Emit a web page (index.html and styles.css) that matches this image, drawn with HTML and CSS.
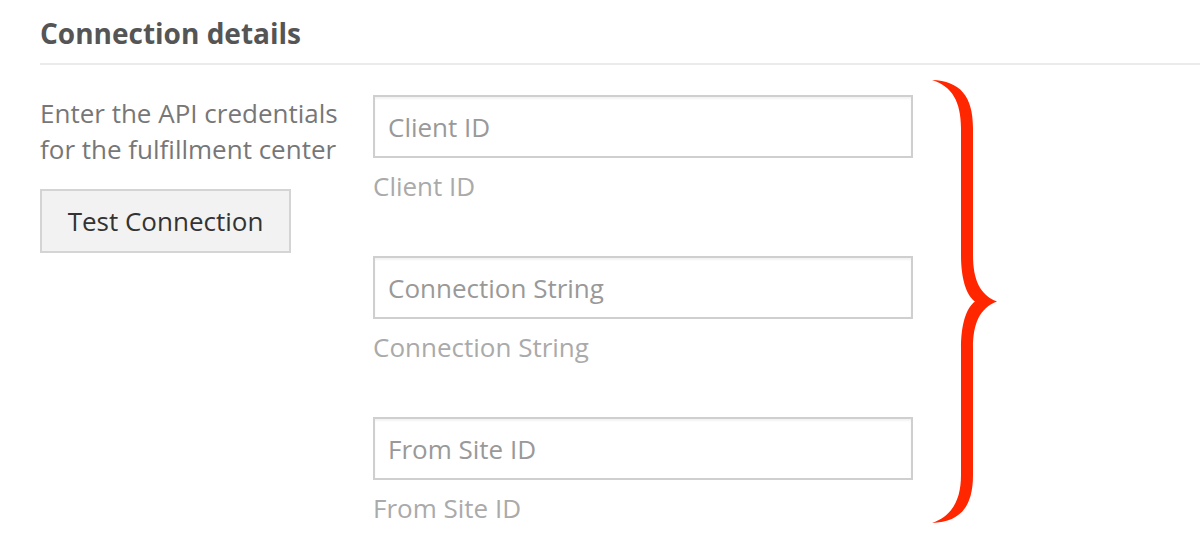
FILE: index.html
```html
<!DOCTYPE html>
<html lang="en">
<head>
<meta charset="utf-8">
<title>Connection details</title>
<link rel="stylesheet" href="styles.css">
</head>
<body>
<section class="panel">
  <h2 class="panel-title">Connection details</h2>
  <div class="panel-row">
    <div class="intro">
      <p class="intro-text">Enter the API credentials for the fulfillment center</p>
      <button class="btn" type="button">Test Connection</button>
    </div>
    <div class="fields">
      <div class="field">
        <input class="field-input" type="text" placeholder="Client ID">
        <div class="field-help">Client ID</div>
      </div>
      <div class="field">
        <input class="field-input" type="text" placeholder="Connection String">
        <div class="field-help">Connection String</div>
      </div>
      <div class="field">
        <input class="field-input" type="text" placeholder="From Site ID">
        <div class="field-help">From Site ID</div>
      </div>
    </div>
    <svg class="brace" width="66" height="444" viewBox="0 0 66 444" aria-hidden="true">
      <path d="M0,0 C28,1 41,16 41,48 L41,175 C41,200 48,215 65,221.5 C48,228 41,243 41,268 L41,395 C41,427 28,442 0,443 C20,436 29,420 29,395 L29,268 C29,245 34,228 43,221.5 C34,215 29,198 29,175 L29,48 C29,22 20,6 0,0 Z" fill="#ff2600"/>
    </svg>
  </div>
</section>
</body>
</html>
```

FILE: styles.css
```css
html, body {
  margin: 0;
  padding: 0;
  background: #ffffff;
}

body {
  font-family: "Open Sans", "Liberation Sans", sans-serif;
  width: 1200px;
  height: 536px;
  overflow: hidden;
}

.panel {
  padding-left: 40px;
}

.panel-title {
  margin: 0;
  padding-top: 17px;
  padding-bottom: 14px;
  font-size: 28px;
  line-height: 32px;
  font-weight: 700;
  color: #555555;
  border-bottom: 2px solid #ebebeb;
}

.panel-row {
  display: flex;
  align-items: flex-start;
  margin-top: 30px;
}

.intro {
  width: 333px;
  flex: none;
}

.intro-text {
  margin: 0;
  font-size: 26px;
  line-height: 36px;
  color: #777777;
  width: 320px;
}

.btn {
  display: block;
  margin-top: 22px;
  box-sizing: border-box;
  width: 251px;
  height: 64px;
  padding: 0;
  background: #f2f2f2;
  border: 2px solid #d4d4d4;
  border-radius: 0;
  font-family: "Open Sans", "Liberation Sans", sans-serif;
  font-size: 26px;
  line-height: 60px;
  color: #333333;
  text-align: center;
}

.fields {
  display: flex;
  flex-direction: column;
  gap: 52px;
  width: 540px;
  flex: none;
}

.field {
  display: flex;
  flex-direction: column;
}

.field-input {
  box-sizing: border-box;
  width: 540px;
  height: 63px;
  margin: 0;
  padding: 0 13px;
  border: 2px solid #cfcfcf;
  border-radius: 0;
  box-shadow: inset 0 2px 2px rgba(0, 0, 0, 0.05);
  font-family: "Open Sans", "Liberation Sans", sans-serif;
  font-size: 26px;
  color: #555555;
  background: #ffffff;
  outline: none;
}

.field-input::placeholder {
  color: #999999;
  opacity: 1;
}

.field-help {
  margin-top: 10px;
  font-size: 26px;
  line-height: 36px;
  color: #aaaaaa;
}

.brace {
  display: block;
  flex: none;
  margin-left: 19px;
  margin-top: -15px;
}
```
